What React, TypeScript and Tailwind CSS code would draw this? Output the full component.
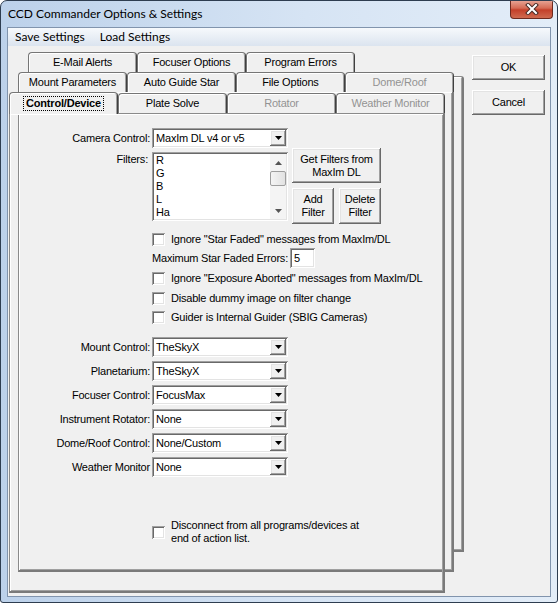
import React from "react"

// Win7 dialog: CCD Commander options, Control/Device page of the tab stack.
const raised =
  "shadow-[inset_-1px_-1px_#696969,inset_1px_1px_#ffffff,inset_-2px_-2px_#a0a0a0,inset_2px_2px_#e3e3e3]"
const sunken =
  "shadow-[inset_1px_1px_#a0a0a0,inset_-1px_-1px_#ffffff,inset_2px_2px_#696969,inset_-2px_-2px_#e3e3e3]"

type TabProps = { label: string; disabled?: boolean }

const Tab = ({ label, disabled = false }: TabProps) => (
  <div
    className={`flex h-[20px] w-[109px] shrink-0 items-center justify-center whitespace-nowrap rounded-t-[4px] border border-b-0 border-[#767676] border-r-[#404040] bg-[#f0f0f0] shadow-[inset_1px_1px_#ffffff,inset_-1px_0_#a0a0a0] ${
      disabled ? "text-[#939393]" : "text-black"
    }`}
  >
    {label}
  </div>
)

const Combo = ({ value }: { value: string }) => (
  <div className={`flex h-[20px] w-[136px] items-center bg-white ${sunken}`}>
    <span className="whitespace-nowrap pl-[4px] leading-[13px]">{value}</span>
    <span
      className={`ml-auto mr-[2px] flex h-[16px] w-[16px] items-center justify-center bg-[#f0f0f0] ${raised}`}
    >
      <svg width="7" height="4" viewBox="0 0 7 4">
        <path d="M0 0h7L3.5 4z" fill="#000" />
      </svg>
    </span>
  </div>
)

const Check = () => (
  <span className={`h-[13px] w-[13px] shrink-0 bg-white ${sunken}`} />
)

const CheckRow = ({ label, className = "" }: { label: string; className?: string }) => (
  <div className={`flex h-[16px] items-center pl-[142px] ${className}`}>
    <Check />
    <span className="ml-[6px] whitespace-nowrap leading-[13px]">{label}</span>
  </div>
)

const Button = ({
  children,
  className = "",
}: {
  children: React.ReactNode
  className?: string
}) => (
  <div
    className={`flex flex-col items-center justify-center whitespace-nowrap bg-[#f0f0f0] text-center leading-[13px] ${raised} ${className}`}
  >
    {children}
  </div>
)

const deviceRows: [string, string][] = [
  ["Mount Control:", "TheSkyX"],
  ["Planetarium:", "TheSkyX"],
  ["Focuser Control:", "FocusMax"],
  ["Instrument Rotator:", "None"],
  ["Dome/Roof Control:", "None/Custom"],
  ["Weather Monitor", "None"],
]

const filters = ["R", "G", "B", "L", "Ha"]

const backPanel =
  "absolute w-[436px] border-l border-t border-[#8a8a8a] border-r-2 border-b-2 border-r-[#7a7a7a] border-b-[#7a7a7a] bg-[#f0f0f0] shadow-[inset_1px_1px_#ffffff,inset_-1px_-1px_#a0a0a0]"

export default function App() {
  return (
    <div className="relative h-[603px] w-[558px] overflow-hidden rounded-t-[7px] rounded-b-[3px] border border-[#2e3d50] bg-[linear-gradient(to_right,#bcd1ea,#d6e4f4_55%,#e3edf8)] font-['Liberation_Sans',Arial,sans-serif] text-[11px] tracking-[-0.2px] text-black">
      {/* title bar */}
      <div className="flex h-[26px] items-start pl-[7px] pt-[5px]">
        <span className="font-['Lato','Noto_Sans',sans-serif] text-[12px] leading-[16px] tracking-normal">
          CCD Commander Options &amp; Settings
        </span>
      </div>
      <div className="absolute right-[4px] top-[-1px] flex h-[19px] w-[43px] items-center justify-center rounded-b-[4px] border border-t-0 border-[#6e2a1f] bg-[linear-gradient(to_bottom,#e9a99a,#d56b55_45%,#c4402a_55%,#cf6a50)]">
        <svg width="14" height="12" viewBox="0 0 14 12">
          <path d="M3 2l8 8M11 2l-8 8" stroke="#4a2a25" strokeWidth="4" strokeLinecap="square" />
          <path d="M3 2l8 8M11 2l-8 8" stroke="#ffffff" strokeWidth="2" strokeLinecap="square" />
        </svg>
      </div>

      {/* client */}
      <div className="mx-[6px] flex h-[570px] w-[544px] flex-col border border-[#8194ad] bg-[#f0f0f0]">
        <div className="flex h-[18px] items-center gap-[15px] bg-[linear-gradient(to_bottom,#f6f9fc,#dbe4ef)] pl-[7px] font-['Lato','Noto_Sans',sans-serif] text-[12px] leading-[16px] tracking-normal">
          <span>Save Settings</span>
          <span>Load Settings</span>
        </div>

        <div className="flex">
          {/* tab stack */}
          <div className="relative ml-[1px] mt-[6px] w-[456px]">
            <div className={`${backPanel} left-[19px] top-[24px] h-[476px] rounded-tr-[3px]`} />
            <div className="relative flex pl-[19px]">
              <Tab label="E-Mail Alerts" />
              <Tab label="Focuser Options" />
              <Tab label="Program Errors" />
            </div>
            <div className="relative z-10 flex pl-[9px]">
              <Tab label="Mount Parameters" />
              <Tab label="Auto Guide Star" />
              <Tab label="File Options" />
              <Tab label="Dome/Roof" disabled />
            </div>
            <div className={`${backPanel} z-10 left-[9px] top-[40px] h-[480px] border-t-0`} />
            <div className="relative z-30 flex h-[21px] items-end">
              <div className="flex h-[22px] w-[109px] shrink-0 translate-y-[1px] items-center justify-center rounded-t-[4px] border border-b-0 border-[#767676] border-r-[#404040] bg-[#f0f0f0] shadow-[inset_1px_1px_#ffffff,inset_-1px_0_#a0a0a0]">
                <span className="whitespace-nowrap px-[2px] font-bold leading-[13px] outline-1 outline-dotted outline-black">
                  Control/Device
                </span>
              </div>
              <Tab label="Plate Solve" />
              <Tab label="Rotator" disabled />
              <Tab label="Weather Monitor" disabled />
            </div>

            {/* front page */}
            <div className="relative z-20 flex h-[480px] w-[436px] flex-col border-l border-t border-[#8a8a8a] border-r-2 border-b-2 border-r-[#7a7a7a] border-b-[#7a7a7a] shadow-[inset_1px_1px_#ffffff,inset_-1px_-1px_#a0a0a0]">
              <div className="mt-[14px] flex items-center">
                <span className="w-[140px] whitespace-nowrap text-right">Camera Control:</span>
                <div className="ml-[2px]">
                  <Combo value="MaxIm DL v4 or v5" />
                </div>
              </div>

              <div className="flex items-start">
                <span className="mt-[5px] w-[142px] pr-[4px] text-right leading-[13px]">Filters:</span>
                <div className={`mt-[4px] flex h-[69px] w-[136px] bg-white ${sunken}`}>
                  <div className="flex flex-1 flex-col pl-[4px] pt-[2px] leading-[13px]">
                    {filters.map((f) => (
                      <span key={f}>{f}</span>
                    ))}
                  </div>
                  <div className="my-[2px] mr-[2px] flex w-[16px] flex-col bg-[#f4f4f4]">
                    <div className="flex h-[17px] items-center justify-center">
                      <svg width="7" height="4" viewBox="0 0 7 4">
                        <path d="M0 4h7L3.5 0z" fill="#555" />
                      </svg>
                    </div>
                    <div className="h-[15px] rounded-[2px] border border-[#9e9e9e] bg-[linear-gradient(to_right,#f4f4f4,#e2e2e2)]" />
                    <div className="flex-1" />
                    <div className="flex h-[17px] items-center justify-center">
                      <svg width="7" height="4" viewBox="0 0 7 4">
                        <path d="M0 0h7L3.5 4z" fill="#555" />
                      </svg>
                    </div>
                  </div>
                </div>
                <div className="ml-[4px] flex flex-col">
                  <Button className="h-[35px] w-[89px]">
                    <span>Get Filters from</span>
                    <span>MaxIm DL</span>
                  </Button>
                  <div className="mt-[5px] flex gap-[5px]">
                    <Button className="h-[36px] w-[42px]">
                      <span>Add</span>
                      <span>Filter</span>
                    </Button>
                    <Button className="h-[36px] w-[42px]">
                      <span>Delete</span>
                      <span>Filter</span>
                    </Button>
                  </div>
                </div>
              </div>

              <CheckRow className="mt-[7px]" label={'Ignore "Star Faded" messages from MaxIm/DL'} />
              <div className="mt-[1px] flex h-[20px] items-center pl-[142px]">
                <span className="w-[138px] whitespace-nowrap">Maximum Star Faded Errors:</span>
                <div className={`flex h-[20px] w-[25px] items-center bg-white pl-[4px] ${sunken}`}>5</div>
              </div>
              <CheckRow className="mt-[2px]" label={'Ignore "Exposure Aborted" messages from MaxIm/DL'} />
              <CheckRow className="mt-[4px]" label="Disable dummy image on filter change" />
              <CheckRow className="mt-[3px]" label="Guider is Internal Guider (SBIG Cameras)" />

              <div className="mt-[12px] flex flex-col gap-[4px]">
                {deviceRows.map(([label, value]) => (
                  <div key={label} className="flex items-center">
                    <span className="w-[140px] whitespace-nowrap text-right">{label}</span>
                    <div className="ml-[2px]">
                      <Combo value={value} />
                    </div>
                  </div>
                ))}
              </div>

              <div className="mt-[42px] flex items-center pl-[142px]">
                <Check />
                <span className="ml-[6px] whitespace-nowrap leading-[13px]">
                  Disconnect from all programs/devices at
                  <br />
                  end of action list.
                </span>
              </div>
            </div>
          </div>

          <div className="ml-[7px] mt-[9px] flex flex-col gap-[10px]">
            <Button className="h-[25px] w-[73px]">OK</Button>
            <Button className="h-[25px] w-[73px]">Cancel</Button>
          </div>
        </div>
      </div>
    </div>
  )
}
